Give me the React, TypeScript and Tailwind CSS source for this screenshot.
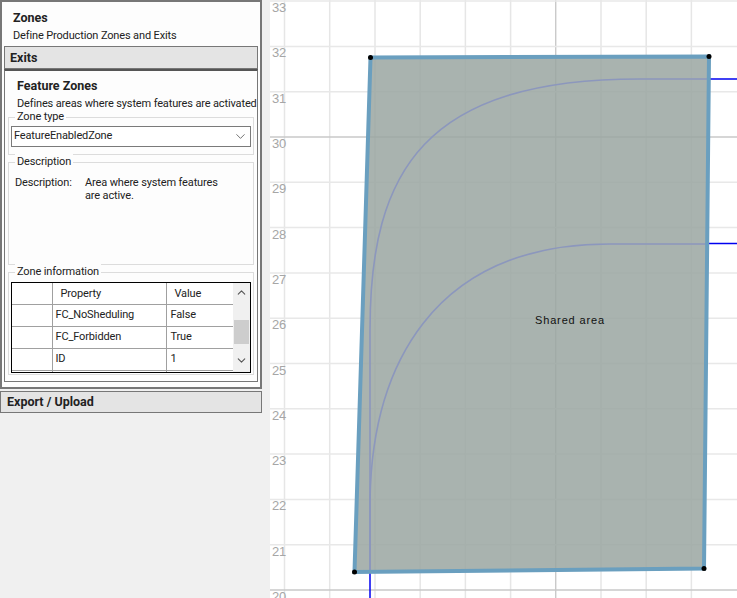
import React from 'react';
import { ChevronDown, ChevronUp } from 'lucide-react';

const font = { fontFamily: '"Roboto", "Liberation Sans", sans-serif' };

const xLines = [284.5, 329.7, 375, 420.2, 465.4, 510.6, 555.8, 601, 646.2, 691.4];
const yLabels = [33, 32, 31, 30, 29, 28, 27, 26, 25, 24, 23, 22, 21, 20];
const rows = [
  ['FC_NoSheduling', 'False'],
  ['FC_Forbidden', 'True'],
  ['ID', '1'],
  ['', ''],
];

function Group({ title, className, children }: { title: string; className: string; children?: React.ReactNode }) {
  return (
    <div className={`relative mx-[3px] border border-[#dcdcdc] ${className}`}>
      <span className="absolute left-[6px] top-[-9px] bg-[#fdfdfd] px-[2px] leading-[16px] text-[#222]">{title}</span>
      {children}
    </div>
  );
}

function Chart() {
  const yAt = (v: number) => 590 - (v - 20) * 45.3;
  return (
    <svg width="467" height="598" viewBox="270 0 467 598" className="block">
      <rect x="270" y="0" width="467" height="598" fill="#fff" />
      {xLines.map((x) => (
        <line key={x} x1={x} y1="0" x2={x} y2="598" stroke={x === 555.8 ? '#b4b4b4' : '#e6e6e6'} strokeWidth={x === 555.8 ? 1 : 1.5} />
      ))}
      {yLabels.map((v) => (
        <line key={v} x1="270" y1={yAt(v)} x2="737" y2={yAt(v)} stroke={v === 30 || v === 20 ? '#c8c8c8' : '#e8e8e8'} strokeWidth="1.5" />
      ))}
      {yLabels.map((v) => (
        <text key={v} x="272" y={yAt(v) + 11} fontSize="13" fill="#a6a6a6" fontFamily="Liberation Sans, sans-serif">
          {v}
        </text>
      ))}
      <line x1="709" y1="79" x2="737" y2="79" stroke="#0000f0" strokeWidth="1.5" />
      <line x1="709" y1="243.5" x2="737" y2="243.5" stroke="#0000f0" strokeWidth="1.5" />
      <line x1="370" y1="572" x2="370" y2="598" stroke="#0000f0" strokeWidth="1.5" />
      <polygon points="370.5,57.5 709,56.5 704,568.5 354.5,572" fill="#9aa6a1" fillOpacity="0.85" />
      <path d="M370 572 L370 330 C370 170 425 79 640 79 L709 79" fill="none" stroke="#8c97bd" strokeWidth="1.6" />
      <path d="M370 572 L370 500 C372 370 430 244 610 244 L709 244" fill="none" stroke="#8c97bd" strokeWidth="1.6" />
      <polygon points="370.5,57.5 709,56.5 704,568.5 354.5,572" fill="none" stroke="#6a9fbf" strokeWidth="4" />
      {[
        [370.5, 57.5],
        [709, 56.5],
        [704, 568.5],
        [354.5, 572],
      ].map(([x, y]) => (
        <circle key={x} cx={x} cy={y} r="2.5" fill="#000" />
      ))}
      <text x="535" y="324" fontSize="11" letterSpacing="0.85" fill="#111" fontFamily="Liberation Sans, sans-serif">
        Shared area
      </text>
    </svg>
  );
}

export default function App() {
  return (
    <div className="flex h-[598px] w-[737px] overflow-hidden bg-[#f0f0f0] text-[11px] tracking-[-0.14px] text-[#222]" style={font}>
      <div className="w-[270px] flex-none">
        <div className="h-[389px] w-[262px] border-2 border-[#777] bg-[#fdfdfd]">
          <div className="h-[44px] pl-[11px] pt-[8px]">
            <div className="text-[12.5px] font-bold leading-[16px] tracking-normal">Zones</div>
            <div className="mt-[2px] leading-[16px]">Define Production Zones and Exits</div>
          </div>
          <div className="mx-[2px] flex h-[23px] items-center border border-[#777] bg-[#e4e4e4] pl-[5px] pt-[1px] text-[12.5px] font-bold tracking-normal">Exits</div>
          <div className="mx-[2px] h-[313px] border-x border-b border-t-2 border-[#777] border-t-[#555]">
            <div className="pl-[12px] pt-[7px] text-[12.5px] font-bold leading-[16px] tracking-normal">Feature Zones</div>
            <div className="whitespace-nowrap pl-[12px] pt-[2px] leading-[16px]">Defines areas where system features are activated</div>
            <Group title="Zone type" className="mt-[5px] h-[38px]">
              <div className="mx-[2px] mt-[8px] flex h-[21px] items-center justify-between border border-[#7a7a7a] bg-white pl-[2px] pr-[2px]">
                <span>FeatureEnabledZone</span>
                <ChevronDown size={15} strokeWidth={1.2} color="#444" />
              </div>
            </Group>
            <Group title="Description" className="mt-[7px] h-[103px]">
              <div className="flex pl-[6px] pt-[13px] leading-[13px]">
                <span className="w-[70px] flex-none">Description:</span>
                <span className="w-[135px]">Area where system features are active.</span>
              </div>
            </Group>
            <Group title="Zone information" className="mt-[7px] h-[103px]">
              <div className="mx-[2px] mt-[9px] flex h-[91px] overflow-hidden border border-black bg-white">
                <table className="h-fit w-[221px] flex-none table-fixed border-collapse">
                  <thead>
                    <tr className="h-[21px]">
                      <th className="w-[40px] border-r border-b border-[#a0a0a0] font-normal"></th>
                      <th className="w-[114px] border-x border-b border-[#a0a0a0] pl-[8px] pt-[2px] text-left font-normal">Property</th>
                      <th className="border-l border-b border-[#a0a0a0] pl-[8px] pt-[2px] text-left font-normal">Value</th>
                    </tr>
                  </thead>
                  <tbody>
                    {rows.map(([name, value], i) => (
                      <tr key={i} className="h-[22px]">
                        <td className="border-r border-b border-[#a0a0a0]"></td>
                        <td className="border-x border-b border-[#a0a0a0] pl-[3px]">{name}</td>
                        <td className="border-l border-b border-[#a0a0a0] pl-[4px]">{value}</td>
                      </tr>
                    ))}
                  </tbody>
                </table>
                <div className="flex flex-1 flex-col items-center bg-[#f0f0f0]">
                  <ChevronUp size={13} strokeWidth={2} color="#555" className="mt-[3px]" />
                  <div className="mt-[21px] h-[24px] w-[15px] bg-[#cdcdcd]"></div>
                  <ChevronDown size={13} strokeWidth={2} color="#555" className="mt-[10px]" />
                </div>
              </div>
            </Group>
          </div>
        </div>
        <div className="mt-[2px] flex h-[22px] w-[262px] items-center border border-[#777] bg-[#e4e4e4] pl-[6px] text-[12.5px] font-bold tracking-normal">Export / Upload</div>
      </div>
      <div className="flex-1">
        <Chart />
      </div>
    </div>
  );
}
